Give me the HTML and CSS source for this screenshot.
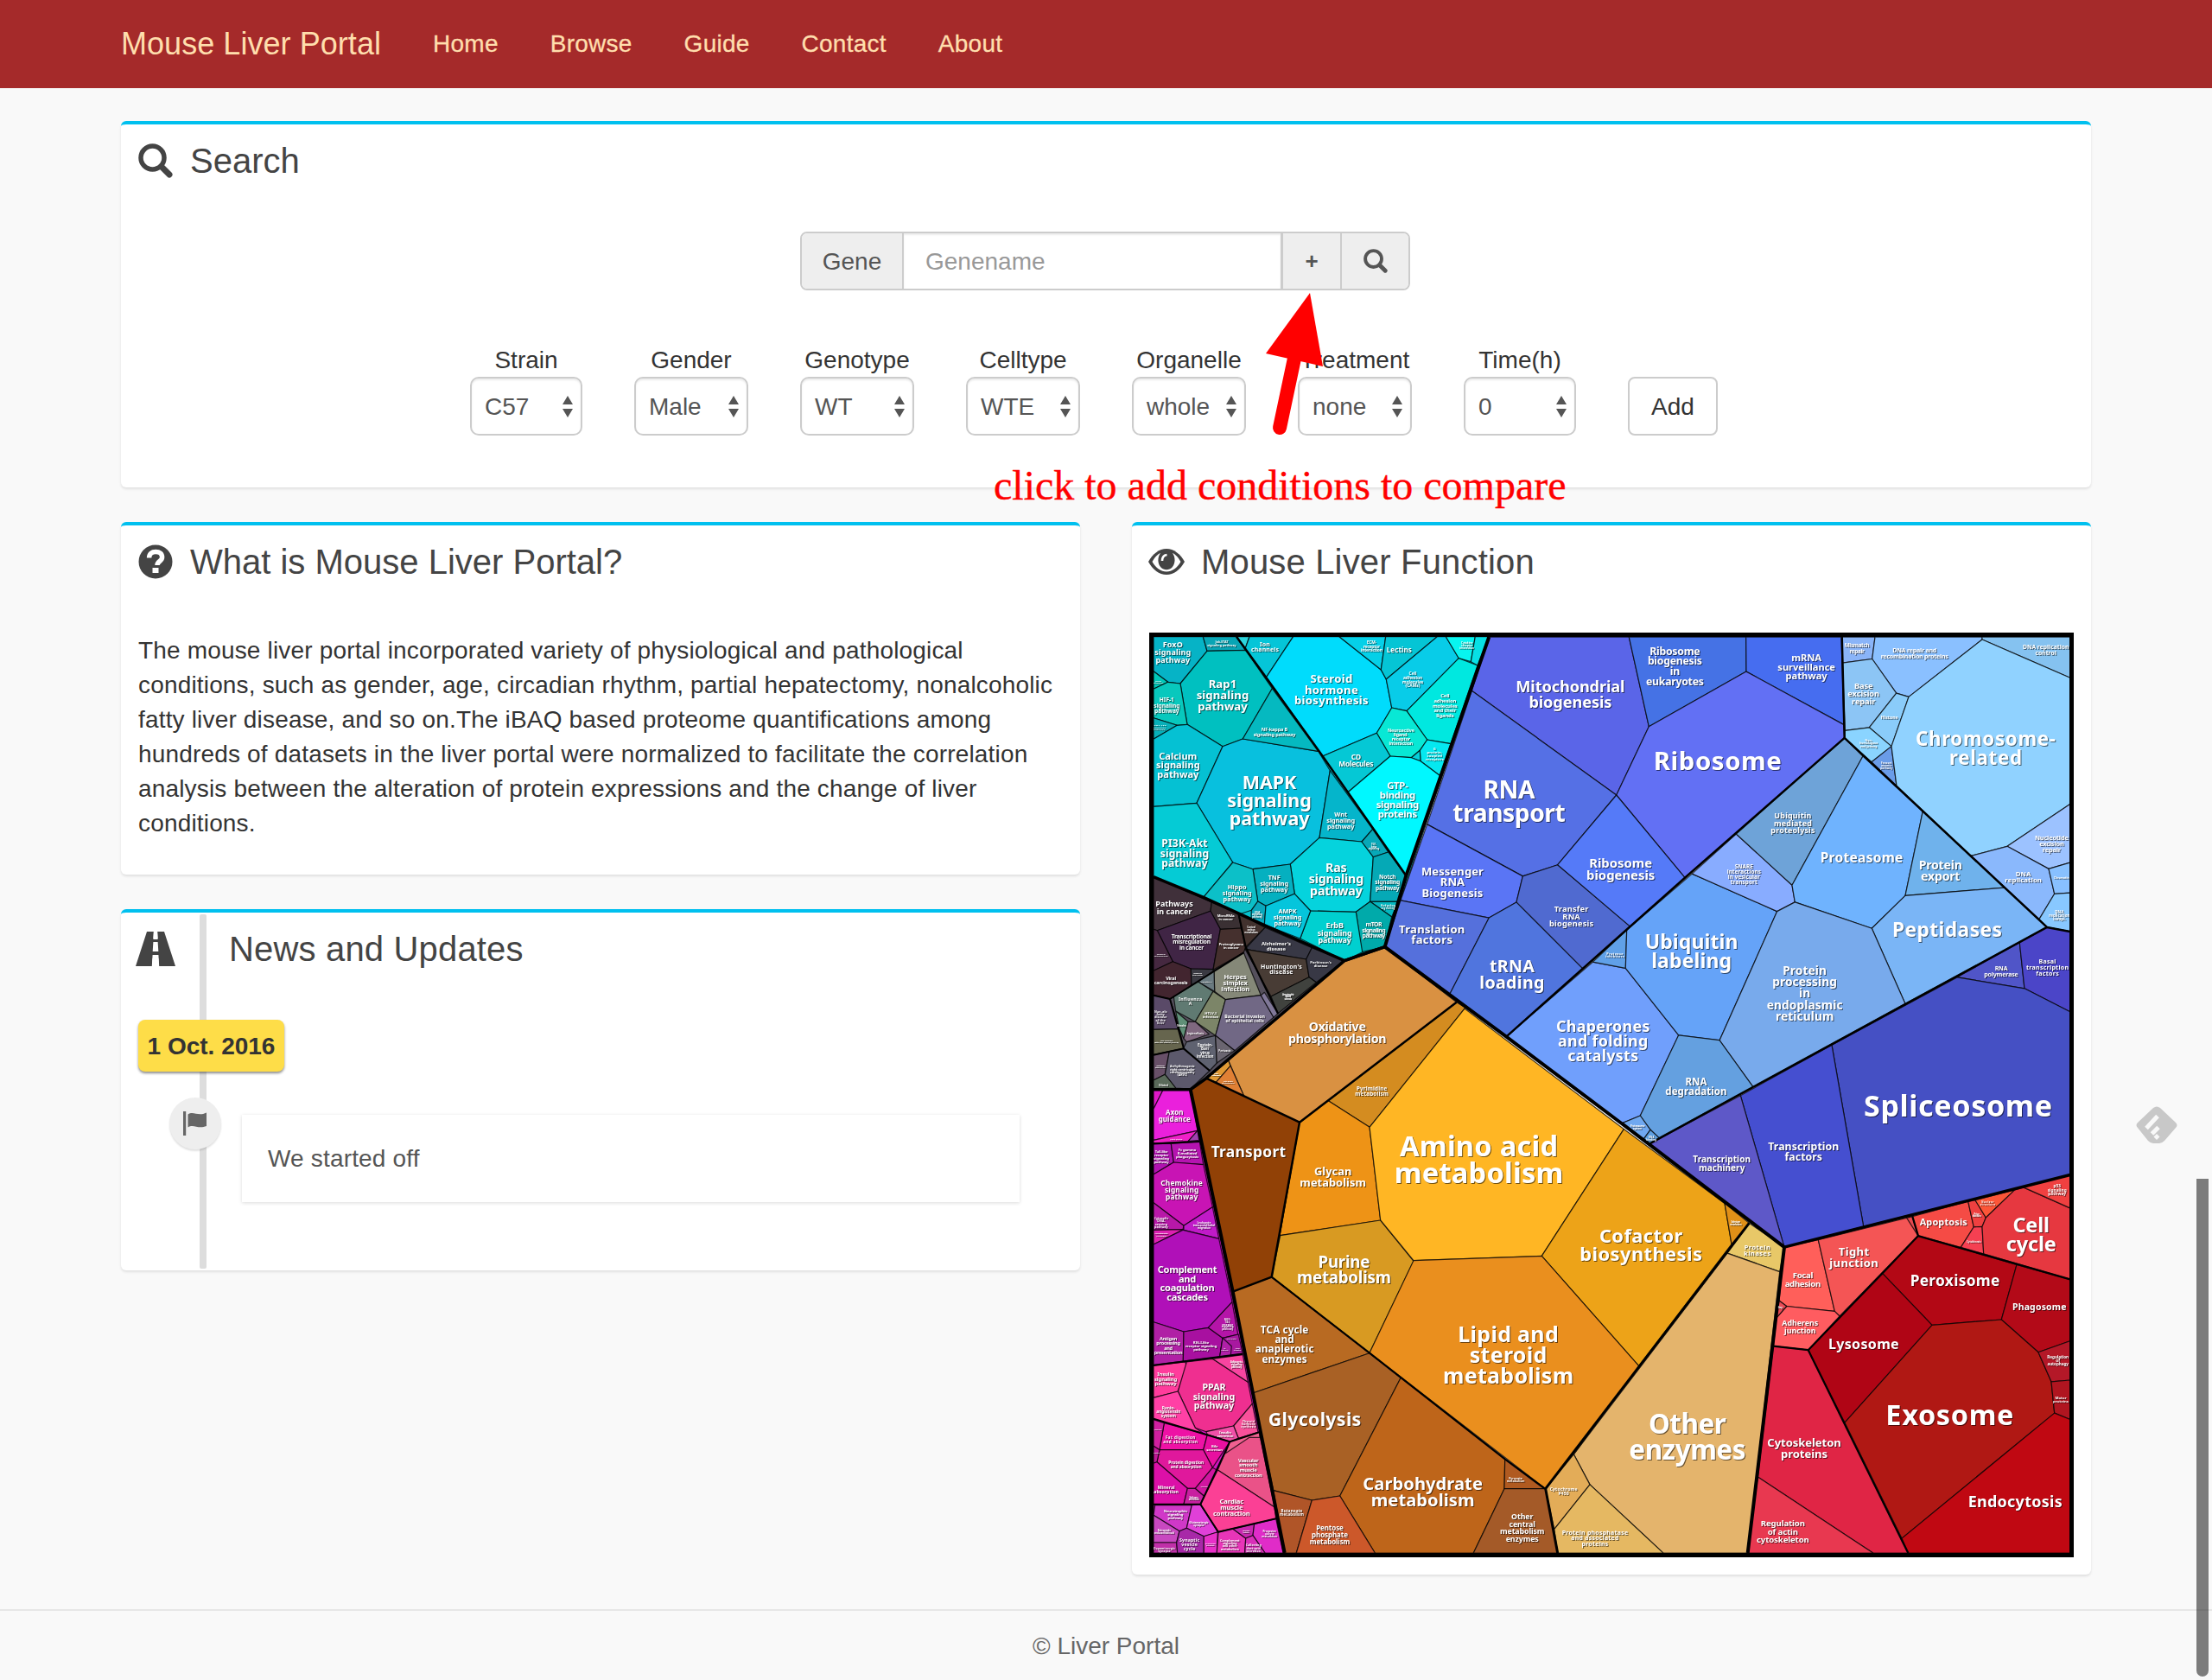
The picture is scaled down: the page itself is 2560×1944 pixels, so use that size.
FILE: index.html
```html
<!DOCTYPE html>
<html lang="en">
<head>
<meta charset="utf-8">
<title>Mouse Liver Portal</title>
<link rel="stylesheet" href="styles.css">
</head>
<body>
<svg class="defs" width="0" height="0" aria-hidden="true">
  <symbol id="i-search" viewBox="0 0 40 40"><circle cx="16.5" cy="16.5" r="13.5" fill="none" stroke="currentColor" stroke-width="5.500"/><path d="M27 27l9 9" stroke="currentColor" stroke-width="7" stroke-linecap="round"/></symbol>
  <symbol id="i-help" viewBox="0 0 40 40"><circle cx="20" cy="20" r="19.5" fill="currentColor"/><path d="M12.6 15.5c0-4.600 3-7 7.600-7s7.400 2.400 7.400 6.200c0 5-5.600 4.600-5.600 9.300" fill="none" stroke="#fff" stroke-width="5.500"/><path d="M16.500 27h7v6h-7z" fill="#fff"/></symbol>
  <symbol id="i-eye" viewBox="0 0 42 34"><path d="M0 17C5 8 12.500 2 21 2s16 6 21 15c-5 9-12.500 15-21 15S5 26 0 17z" fill="currentColor"/><path d="M4.500 17C8 11 11 8.500 14 7c-3.500 5-3.500 12 .5 16.500 3.500 3.500 9.500 3.500 13 0C31.500 19 31.500 12 28 7c3 1.500 6 4 9.500 10C33 24.500 27.500 28.500 21 28.500S9 24.500 4.500 17z" fill="#fff"/><path d="M16 16c0-4 2-6.500 5.500-7" fill="none" stroke="#fff" stroke-width="2.600"/></symbol>
  <symbol id="i-road" viewBox="0 0 46 40"><path d="M13 0h8l-.6 9h5.200L25 0h8l13 40H27l-.6-9h-6.800L19 40H0z" fill="currentColor"/><path d="M20.400 12h5.200l.7 11h-6.600z" fill="#fff"/><path d="M20.800 0h4.400l.4 8h-5.200zM19.600 27h6.800l.8 13h-8.400z" fill="#fff"/></symbol>
  <symbol id="i-flag" viewBox="0 0 28 28"><path d="M0 0h3.200v28H0z" fill="currentColor"/><path d="M5.500 3.500C12-1 17 6.500 27 1.500v15.500C17 21 12 14 5.500 18.500z" fill="currentColor"/></symbol>
</svg>

<nav class="navbar">
  <div class="container navbar-inner">
    <a class="brand">Mouse Liver Portal</a>
    <a class="nav-link">Home</a>
    <a class="nav-link">Browse</a>
    <a class="nav-link">Guide</a>
    <a class="nav-link">Contact</a>
    <a class="nav-link">About</a>
  </div>
</nav>

<main class="container content">
  <section class="box search-box">
    <h3 class="box-title"><svg class="icon"><use href="#i-search"/></svg>Search</h3>
    <div class="input-group">
      <span class="addon addon-label">Gene</span>
      <span class="field">Genename</span>
      <span class="addon addon-plus">+</span>
      <span class="addon addon-go"><svg class="icon-sm"><use href="#i-search"/></svg></span>
    </div>
    <div class="conditions">
      <div class="cond first"><label>Strain</label><div class="select">C57<i class="carets"></i></div></div>
      <div class="cond"><label>Gender</label><div class="select">Male<i class="carets"></i></div></div>
      <div class="cond"><label>Genotype</label><div class="select">WT<i class="carets"></i></div></div>
      <div class="cond"><label>Celltype</label><div class="select">WTE<i class="carets"></i></div></div>
      <div class="cond"><label>Organelle</label><div class="select">whole<i class="carets"></i></div></div>
      <div class="cond"><label>Treatment</label><div class="select">none<i class="carets"></i></div></div>
      <div class="cond last"><label>Time(h)</label><div class="select">0<i class="carets"></i></div></div>
      <div class="btn">Add</div>
    </div>
  </section>

  <div class="columns">
    <div class="column">
      <section class="box about-box">
        <h3 class="box-title"><svg class="icon"><use href="#i-help"/></svg>What is Mouse Liver Portal?</h3>
        <p>The mouse liver portal incorporated variety of physiological and pathological<br>conditions, such as gender, age, circadian rhythm, partial hepatectomy, nonalcoholic<br>fatty liver disease, and so on.The iBAQ based proteome quantifications among<br>hundreds of datasets in the liver portal were normalized to facilitate the correlation<br>analysis between the alteration of protein expressions and the change of liver<br>conditions.</p>
      </section>
      <section class="box news-box">
        <h3 class="box-title spaced"><svg class="icon-road"><use href="#i-road"/></svg>News and Updates</h3>
        <div class="date">1 Oct. 2016</div>
        <div class="entry">
          <div class="marker"><svg class="icon-flag"><use href="#i-flag"/></svg></div>
          <div class="entry-body">We started off</div>
        </div>
      </section>
    </div>
    <div class="column">
      <section class="box map-box">
        <h3 class="box-title spaced"><svg class="icon-eye"><use href="#i-eye"/></svg>Mouse Liver Function</h3>
        <svg class="map" id="map" viewBox="1330 732 1070 1070"></svg>
      </section>
    </div>
  </div>
</main>

<footer class="footer">© Liver Portal</footer>

<svg class="pointer" width="80" height="170" viewBox="1460 335 80 170"><path d="M1499 410L1481 495" stroke="#f00" stroke-width="16" stroke-linecap="round"/><path d="M1516 339l15 85-66-15z" fill="#f00"/></svg>
<div class="hint">click to add conditions to compare</div>
<svg class="feedly" viewBox="0 0 48 43"><path d="M20 2Q24-1 28 2L46 19Q49 22 46 25L33 40Q30 43 27 43H20Q17 43 14 40L2 25Q-1 22 2 19z" fill="#c8c8c8"/><path d="M12 25.500L25 11.500M18.500 32L26 24.500" stroke="#f9f9f9" stroke-width="5"/><path d="M24 32l3.500 3.500-3.500 3.500-3.500-3.500z" fill="#f9f9f9"/></svg>
<div class="scroll-thumb"></div>
<script src="map.js"></script>
</body>
</html>
```
FILE: styles.css
```css
* { box-sizing: border-box; }
body {
  margin: 0;
  position: relative;
  min-height: 1944px;
  overflow: hidden;
  background: #f9f9f9;
  color: #333;
  font: 28px/40px "Liberation Sans", Arial, sans-serif;
}
.defs { position: absolute; }
.container { width: 2280px; margin: 0 auto; }

.navbar { height: 102px; background: #a52a2a; color: #ffdead; }
.navbar-inner { display: flex; align-items: center; gap: 60px; height: 101px; }
.brand { font-size: 36px; letter-spacing: .05px; }
.nav-link { letter-spacing: .25px; -webkit-text-stroke: .3px; }

.content { display: flex; flex-direction: column; gap: 40px; padding-top: 38px; }
.columns { display: flex; gap: 60px; align-items: flex-start; }
.column { flex: 1; display: flex; flex-direction: column; gap: 40px; }
.box {
  background: #fff;
  border-top: 4px solid #00c0ef;
  border-radius: 6px;
  padding: 20px;
  box-shadow: 0 2px 3px rgba(0, 0, 0, .1);
}
.box-title {
  display: flex;
  align-items: center;
  gap: 20px;
  margin: 0 0 60px;
  height: 44px;
  font-size: 40px;
  line-height: 44px;
  font-weight: 400;
  color: #444;
}
.box-title.spaced { letter-spacing: .17px; }
.icon { width: 40px; height: 40px; }
.icon-sm { width: 28px; height: 28px; }
.icon-eye { width: 42px; height: 34px; margin: 0 -1px 0 -1px; }
.icon-road { width: 46px; height: 40px; margin: 0 42px 0 -3px; }
.icon-flag { width: 28px; height: 28px; }

.search-box { height: 424px; }
.input-group {
  display: flex;
  width: 706px;
  height: 68px;
  margin: 0 0 61px 766px;
  border: 2px solid #ccc;
  border-radius: 8px;
  overflow: hidden;
  line-height: 65px;
  color: #555;
}
.addon { display: flex; align-items: center; justify-content: center; background: #eee; }
.addon-label { width: 118px; border-right: 2px solid #ccc; }
.field { width: 436px; padding-left: 25px; color: #999; box-shadow: inset 0 2px 2px rgba(0, 0, 0, .075); }
.addon-plus { width: 71px; border-left: 3px solid #ccc; border-right: 2px solid #ccc; font-size: 26px; font-weight: 700; line-height: 67px; }
.addon-go { flex: 1; }

.conditions { display: flex; gap: 60px; margin-left: 384px; align-items: flex-end; }
.cond { width: 132px; text-align: center; }
.cond.first, .cond.last { width: 130px; }
.cond label { display: block; height: 39px; margin: 0 -10px; }
.select {
  display: flex;
  align-items: center;
  justify-content: space-between;
  height: 68px;
  padding: 1px 9px 0 15px;
  border: 2px solid #ccc;
  border-radius: 10px;
  color: #555;
  box-shadow: inset 0 2px 2px rgba(0, 0, 0, .075);
}
.carets { display: flex; flex-direction: column; gap: 5px; }
.carets::before, .carets::after { content: ""; border: 6.500px solid transparent; border-bottom: 10px solid #555; border-top: 0; }
.carets::after { border-top: 10px solid #555; border-bottom: 0; }
.btn {
  width: 104px;
  height: 68px;
  border: 2px solid #ccc;
  border-radius: 8px;
  text-align: center;
  line-height: 66px;
}

.about-box p { margin: 0 0 20px; white-space: nowrap; letter-spacing: .17px; line-height: 40px; padding-top: 1px; margin-bottom: 19px; }
.news-box { position: relative; height: 418px; }
.news-box::before {
  content: "";
  position: absolute;
  left: 91px;
  top: 2px;
  bottom: 2px;
  width: 8px;
  border-radius: 2px;
  background: #ddd;
}
.date {
  position: relative;
  width: 169px;
  height: 60px;
  border-radius: 8px;
  background: #fedd48;
  box-shadow: 0 2px 3px rgba(0, 0, 0, .45);
  text-align: center;
  line-height: 62px;
  font-weight: 700;
}
.entry { position: relative; display: flex; gap: 24px; margin: 30px 0 0 36px; }
.marker {
  display: flex;
  align-items: center;
  justify-content: center;
  width: 60px;
  height: 60px;
  border-radius: 50%;
  background: #eee;
  color: #666;
  box-shadow: 0 2px 2px rgba(0, 0, 0, .12);
}
.entry-body {
  width: 900px;
  height: 101px;
  margin-top: 20px;
  padding: 31px 30px;
  background: #fff;
  color: #555;
  letter-spacing: .17px;
  box-shadow: 0 1px 4px rgba(0, 0, 0, .15);
}

.map { display: block; width: 1070px; height: 1070px; }
.cell { stroke: rgba(0, 0, 0, .75); stroke-width: 1.200; stroke-linejoin: round; }
.edge { fill: none; stroke: #000; stroke-linejoin: round; }
.labels { fill: #fff; text-anchor: middle; font-family: "Noto Sans", sans-serif; font-weight: 700; filter: drop-shadow(1.200px 1.200px .5px rgba(0, 0, 0, .55)); }

.footer { margin-top: 40px; border-top: 2px solid #e7e7e7; padding-top: 21px; text-align: center; color: #666; }

.pointer { position: absolute; left: 1460px; top: 335px; }
.hint {
  position: absolute;
  left: 1150px;
  top: 536px;
  font: 48px/52px "Liberation Serif", "Times New Roman", serif;
  color: #f00;
  white-space: nowrap;
  -webkit-text-stroke: .4px;
}
.feedly { position: absolute; left: 2472px; top: 1280px; width: 48px; height: 43px; }
.scroll-thumb {
  position: absolute;
  left: 2542px;
  top: 1364px;
  width: 14px;
  height: 576px;
  border-radius: 0 0 7px 7px;
  background: rgba(0, 0, 0, .5);
}
```
FILE: map.js
```js
// Protein function map. Each sheet has its own origin and scale:
// [x, y, units per px across, units per px down]
const SHEETS = {
  A: [1320, 720, 3, 3],
  B: [1650, 720, 3, 2.8],
  C: [2030, 720, 3, 2.8],
  D: [2010, 1240, 3, 2.7034],
  E: [1680, 1240, 3, 2.7034],
  F: [1320, 1060, 3, 3],
  G: [1320, 1420, 3, 3]
};

// colour, corner points
const CELLS = {
  A: `#05c0cc 45,50 1210,50 848,1127 708,1175 45,884
#06b3c6 45,50 217,50 231,100 138,213 95,208 45,170
#08a5b5 217,50 333,50 365,97 231,100
#00c0c0 231,100 365,97 457,230 355,405 285,431 162,355 138,213
#00c8b8 45,170 95,208 45,232
#08c8bd 95,208 138,213 162,355 127,358 45,332 45,232
#08b0b8 45,332 127,358 45,406
#05c1d3 45,406 127,358 162,355 285,431 195,628 45,640
#08c0de 285,431 355,405 617,448 658,515 621,748 520,840 390,857 320,834 195,628
#05b9c0 457,230 617,448 355,405
#05cbd5 45,640 195,628 320,834 218,955 45,884
#05b5cb 658,515 806,718 768,762 621,748
#05d3dd 520,840 621,748 768,762 808,815 797,970 748,1006 590,1002 535,943
#05b0c0 390,857 520,840 535,943 435,985 407,969
#0cc0c8 320,834 390,857 407,969 385,1000 340,1015 218,955
#0aa8bc 385,1000 407,969 435,985 430,1050 384,1035
#08a8b8 768,762 806,718 860,798 808,815
#05a9b6 808,815 860,798 922,880 895,970 797,970
#05b8c0 797,970 895,970 872,1023
#00aaaa 797,970 872,1023 848,1127 768,1145 748,1006
#00d0d0 590,1002 748,1006 770,1145 708,1175 554,1098
#05c5dc 435,985 535,943 590,1002 554,1098 430,1050
#2cd5dd 333,50 378,50 364,90
#05c5d8 378,50 530,50 437,190 364,90
#00dcfc 530,50 690,50 835,165 853,198 872,297 820,385 632,465 437,190
#05d0e8 690,50 851,50 835,165
#05c5d5 851,50 1030,50 853,198 835,165
#08cce8 1030,50 1060,50 1105,125 924,308 872,297 853,198
#08f5f0 1060,50 1162,50 1147,137 1105,125
#08e0e5 1162,50 1210,50 1170,150 1147,137
#00e8e0 1105,125 1170,150 1077,422 995,408 924,308
#08e8d5 872,297 924,308 995,408 970,445 940,470 867,465 820,385
#05e8f0 995,408 1077,422 1040,533 972,482 970,445
#05d0d8 940,470 970,445 972,482
#05c8d5 632,465 820,385 867,465 720,590
#00f8ff 867,465 940,470 972,482 1040,533 922,880 720,590`,
  B: `#5a65e8 220,48 706,48 775,338 662,560 160,222
#4572e5 706,48 1112,48 1113,160 775,338
#466df0 1112,48 1443,48 1452,332 1113,160
#6270f4 1113,160 1452,332 1454,375 900,828 662,560 775,338
#5570e5 160,222 662,560 458,786 337,823 5,655
#5a75f5 5,655 337,823 315,907 220,958 -87,901
#5570dc -87,901 220,958 84,1204 -142,1052
#5075de 220,958 315,907 545,1122 280,1343 84,1204
#506ad0 337,823 458,786 710,986 545,1122 315,907
#557af8 662,560 900,828 710,986 458,786
#709ffc 580,1101 694,1121 878,1338 745,1599 680,1624 280,1343
#60a0e8 580,1101 698,997 694,1121
#65a3f8 925,815 1220,937 1020,1355 878,1338 694,1121 698,997
#88acff 1078,686 1272,852 1282,907 1220,937 925,815`,
  C: `#6ea3d8 314,375 378,434 132,852 -62,686
#8ab4f8 305,48 420,48 410,119 307,132
#8ac0ff 420,48 792,48 792,56 537,242 494,230 410,119
#85c2f0 792,48 1097,48 1097,180 792,56
#8cc5f5 307,132 410,119 494,230 400,341 316,351
#8accfa 494,230 537,242 477,402 400,341
#8ad4ff 316,351 400,341 477,402 408,453 314,375
#6a9ce8 408,453 477,402 495,530
#90d2ff 537,242 792,56 1097,180 1097,589 879,726 753,757 495,530 477,402
#9cc2ff 1097,589 1097,779 1023,799 879,726
#8ab8fc 753,757 879,726 1023,799 1043,880 990,962
#88c0ff 1023,799 1097,779 1097,877 1043,880
#88c8ff 1043,880 1097,877 1097,1002 1017,988 990,962
#6fb3fe 378,434 586,612 525,886 409,992 142,907 132,852
#6fb2ec 586,612 870,860 525,886
#7ab5f6 525,886 870,860 1017,988 525,1236 409,992
#78aaec 142,907 409,992 525,1236 -3,1506 -120,1355 80,937
#5055c8 705,1150 922,1038 939,1187
#4b45c8 922,1038 1017,988 1097,1002 1097,1262 939,1187`,
  D: `#4550c4 330,-83 765,-295 999,-260 1157,-187 1157,323 440,485
#454fd0 13,75 330,-83 440,485 165,549
#ff5f5a 165,549 283,526 340,750 173,734 147,716
#f45555 283,526 610,453 630,514 357,765 340,750
#e84a50 590,458 610,453 630,514
#ff5c60 173,734 340,750 357,765 248,871 127,859 138,770
#e84a55 147,716 173,734 138,770
#f54b45 610,453 803,406 823,486 778,550 630,514
#ee4040 803,406 828,402 865,457 852,485 823,486
#fc5638 828,402 965,370 865,457
#f54052 823,486 852,485 857,570 778,550
#e63840 965,370 995,362 1157,427 1157,650 857,570 852,485 865,457
#f04040 995,362 1157,323 1157,427
#b30815 630,514 972,604 919,776 678,793 507,632
#b30a18 972,604 1157,650 1157,843 1047,878 919,776
#b00515 507,632 678,793 375,1098 248,871
#b01814 678,793 919,776 1047,878 1092,970 1103,1068 573,1460 375,1098
#b41828 1047,878 1157,843 1157,965 1092,970
#b01520 1092,970 1157,965 1157,1088 1103,1068
#c00812 1103,1068 1157,1088 1157,1506 595,1506 573,1460
#e02545 127,859 248,871 595,1506 473,1506 73,1268
#e83850 73,1268 473,1506 38,1506`,
  E: `#64a0e0 788,-114 930,-98 1047,48 720,207 690,182 655,138
#70a8f0 590,162 655,138 690,182 665,213
#5fa0e0 690,182 720,207 685,227 665,213
#5e58c8 685,227 1003,75 1155,549
#ffb624 45,-197 598,180 313,577 -132,591 -247,465 -285,174
#eda318 598,180 948,412 972,540 650,921 313,577
#e09018 948,412 1033,474 972,540
#e8c868 1033,474 1155,549 1139,626 957,568
#e4b46c 957,568 1139,626 1028,1506 735,1506 480,1292 424,1197
#ea8f1e -132,591 313,577 650,921 424,1197 326,1305 -285,880
#e3ac58 424,1197 480,1292 356,1432 326,1305
#e5b862 480,1292 735,1506 368,1506 356,1432
#b05a20 185,1212 326,1305 183,1305
#a45a28 183,1305 326,1305 368,1506 76,1506`,
  F: `#d99142 708,155 848,107 1097,299 552,716 360,627 303,497
#e09a35 228,563 303,497 312,520 262,577
#e08035 262,577 312,520 360,627
#d48c20 1097,299 1128,318 795,733 652,641
#ee9316 652,641 795,733 833,1056 483,1109 552,716
#914106 228,563 552,716 483,1109 455,1253 320,1304 173,602
#55505c 45,-136 340,-10 708,155 228,563 173,602 45,602
#40303a 45,-136 247,-48 243,-17 58,50 45,46
#3a3033 247,-48 340,-10 350,42 277,46 243,-17
#402545 58,50 243,-17 277,46 252,185 175,183 112,158
#45302e 277,46 350,42 365,108 358,127 252,187
#42322e 340,-10 432,40 365,108 350,42
#452840 45,46 58,50 112,158 45,190
#42252f 112,158 175,183 177,245 102,288 45,275 45,190
#3a3a42 175,183 252,185 252,195 177,240
#383845 432,40 595,110 575,150 363,115
#483c35 363,115 575,150 585,212 453,279
#383845 595,110 708,155 610,230 585,212 575,150
#40423e 453,279 585,212 610,230 477,338
#858878 358,127 418,275 295,290 257,262 255,190
#607a72 115,280 200,228 252,262 190,367 122,330
#6a7a80 200,228 255,190 257,262
#7c8568 252,262 295,290 260,415 190,367
#716885 295,290 418,275 462,352 327,467 260,415
#807898 418,275 430,265 477,338 462,352
#5a4a68 45,275 102,288 135,392 45,394
#66654e 45,394 135,392 150,460 45,482
#609078 122,330 165,367 150,425 135,392
#80687f 165,367 190,367 238,410 160,437 150,425
#5f6270 160,437 260,415 265,510 240,537 147,462
#6a6570 260,415 327,467 265,510
#685068 45,482 100,470 85,550 45,570
#5c596c 100,470 147,460 240,537 173,600 122,597 85,550
#5a6a5a 45,570 85,550 122,597 45,600
#d015c0 45,602 173,602 500,2211 45,2211
#e018c8 45,604 78,604 45,670
#ea20dc 78,604 173,602 198,745 45,778 45,670
#f020c8 45,778 198,745 165,782 45,790
#a040b0 198,745 203,778 165,782
#b012b0 45,790 106,790 115,855 45,897
#b514b0 106,790 205,783 218,863 115,855
#c814b4 115,855 218,863 250,1010 150,1075 45,995 45,897
#b818a8 45,995 150,1075 147,1088 45,1090
#c01ac8 250,1010 272,1120 150,1090 150,1075
#dc20b0 45,1090 148,1088 45,1140`,
  G: `#d89a22 485,29 833,-24 948,118 795,437 455,173
#b86a22 455,173 795,437 390,576 320,224
#a96125 795,437 904,522 692,933 595,948 461,914 390,576
#be651a 904,522 1265,805 1263,908 1156,1131 814,1131 692,933
#b05528 461,914 595,948 541,1131 500,1131
#cc582a 595,948 692,933 814,1131 541,1131
#b010b8 148,10 272,40 318,260 235,349 150,363 45,329 45,60
#b020a5 45,329 150,363 148,465 45,478
#a810a0 150,363 235,349 285,385 275,450 148,465
#b515a8 318,260 338,372 285,385 235,349
#a818a0 285,385 340,372 355,440 275,450
#b020a8 285,385 316,413 313,445 275,450
#ff3c9c 45,480 155,468 160,480 130,570 45,592
#ef2f90 160,468 250,457 373,538 388,613 323,690 228,710 190,697 130,570
#f845a0 250,457 355,443 373,538
#ff40a5 45,592 130,570 190,697 228,722 45,665
#f8509a 388,613 408,712 340,733 323,690
#f050a8 228,710 323,690 340,733 310,745 232,720
#ee12a5 82,680 232,720 218,773 66,773
#d020a0 45,668 82,680 66,773 45,760
#e810a0 232,720 310,745 250,835 218,773
#e0189c 66,773 218,773 250,835 190,907 163,907 57,815
#c01898 45,760 66,773 57,815 45,820
#dc10a8 45,820 57,815 163,907 150,962 45,962
#c820a0 163,907 190,907 223,935 208,962 150,962
#d015a0 190,907 250,835 265,843 223,935
#ea5288 310,745 412,712 465,972 268,843
#f06090 310,745 412,712 414,730 378,730 295,785
#fb4095 268,843 465,972 470,1012 270,1058 208,962
#d038c8 50,965 178,965 160,1045 135,1055 45,1000
#e040d8 178,965 208,962 268,1058 220,1073 160,1045
#c848c0 45,1000 135,1055 125,1095 45,1095
#c030a8 45,1095 125,1095 128,1131 45,1131
#a828a8 135,1055 160,1045 220,1073 220,1131 128,1131 125,1095
#e830c8 220,1073 268,1058 265,1131 220,1131
#e835b8 270,1058 320,1047 365,1080 362,1131 265,1131
#c828b0 320,1047 395,1030 390,1070 365,1080
#e02cc8 395,1030 470,1012 495,1131 432,1131 390,1070
#d830b8 365,1080 390,1070 432,1131 362,1131`
};

// width, points of the heavier borders between groups
const EDGES = {
  A: `2.5 333,50 632,465 922,880
4 1210,51 922,880 848,1127
3.5 45,884 218,955 430,1052 708,1175 848,1127`,
  B: `4 -142,1052 280,1343 680,1624`,
  C: `2.5 305,48 314,375 1017,988 1097,1002
2.5 314,375 -240,828 -860,1343
2.5 1017,988 -3,1506`,
  D: `3.5 165,549 1157,323
2.2 127,859 248,871 630,514 1157,650
2.2 248,871 595,1506
2.2 610,453 630,514`,
  E: `4 590,162 1155,549 1028,1506
2.5 685,227 1047,48
3 326,1305 1033,474
3 326,1305 368,1506`,
  F: `3.5 848,107 708,155 228,563 173,602 45,602
4 173,602 320,1304 500,2211
2.5 1097,299 552,716 455,1253 320,1304
2.5 552,716 228,563
2.2 340,-10 365,108 477,338
2 358,127 102,288 45,275
2 102,288 150,460 240,537
2 150,460 45,482
2.2 45,790 205,783`,
  G: `2.2 455,173 795,437 1265,805 1404,908
2.2 45,480 355,440
2 45,665 310,745 412,712
2 310,745 208,962 45,962
2 208,962 270,1058 470,1012`
};

// centre x, centre y, widest line, line pitch, text
const LABELS = {
  A: `112,105,126,26,FoxO|signaling|pathway
282,74,100,10,Jak-STAT|signaling pathway
285,254,182,38,Rap1|signaling|pathway
432,86,96,20,Ion|channels
663,235,258,38,Steroid|hormone|biosynthesis
802,84,74,14,ECM-|receptor|interaction
898,98,88,22,Lectins
945,200,74,14,Cell|adhesion|molecules|(CAMs)
1057,290,86,17,Cell|adhesion|molecules|and their|ligands
1133,80,50,9,Cytokine|receptor|interaction
62,208,32,7,MAPK|signaling
91,289,90,19,HIF-1|signaling|pathway
66,366,48,7,cGMP-PKG|signaling|pathway
465,381,146,16,NF-kappa B|signaling pathway
904,398,92,15,Neuroactive|ligand-|receptor|interaction
1021,459,64,12,G|protein-|coupled|receptors
748,480,120,24,CD|Molecules
130,497,152,32,Calcium|signaling|pathway
892,617,148,33,GTP-|binding|signaling|proteins
447,620,292,62,MAPK|signaling|pathway
695,688,98,21,Wnt|signaling|pathway
810,779,38,8,TGF-|beta|signaling
153,803,170,35,PI3K-Akt|signaling|pathway
679,893,190,41,Ras|signaling|pathway
464,908,98,21,TNF|signaling|pathway
857,903,86,19,Notch|signaling|pathway
335,940,102,21,Hippo|signaling|pathway
405,1015,36,8,VEGF|signaling|pathway
860,988,52,8,Hedgehog|signaling
510,1025,98,21,AMPK|signaling|pathway
674,1079,120,26,ErbB|signaling|pathway
809,1069,80,20,mTOR|signaling|pathway
117,991,130,26,Pathways|in cancer
296,1026,60,11,MicroRNAs|in cancer
177,1110,140,19,Transcriptional|misregulation|in cancer
384,1068,46,8,Central|carbon|metabolism`,
  B: `502,235,378,49,Mitochondrial|biogenesis
865,143,200,33,Ribosome|biogenesis|in|eukaryotes
1014,450,446,69,Ribosome
289,582,390,76,RNA|transport
93,843,216,35,Messenger|RNA|Biogenesis
677,800,238,40,Ribosome|biogenesis
506,953,154,25,Transfer|RNA|biogenesis
22,1013,230,35,Translation|factors
300,1143,226,53,tRNA|loading
923,1067,324,62,Ubiquitin|labeling
657,1079,66,10,Protease|inhibitors
1105,818,118,17,SNARE|interactions|in vesicular|transport
616,1358,326,48,Chaperones|and folding|catalysts
939,1506,214,31,RNA|degradation`,
  C: `182,145,200,30,mRNA|surveillance|pathway
357,85,86,17,Mismatch|repair
557,100,234,19,DNA repair and|recombination proteins
1013,90,160,18,DNA replication|control
380,233,110,25,Base|excision|repair
470,310,60,14,Histone
398,393,64,9,Non-|homologous|end-joining
460,464,42,8,Fanconi|anemia|pathway
805,410,488,60,Chromosome-|related
135,651,154,24,Ubiquitin|mediated|proteolysis
374,765,288,40,Proteasome
647,806,150,38,Protein|export
1033,719,116,20,Nucleotide|excision|repair
935,825,128,21,DNA|replication
1067,829,54,8,Chromatin
1060,951,72,12,DNA|replication|compl.
671,998,382,62,Peptidases
176,1203,264,37,Protein|processing|in|endoplasmic|reticulum
858,1132,118,19,RNA|polymerase
1019,1119,148,19,Basal|transcription|factors`,
  D: `769,110,656,84,Spliceosome
232,250,246,32,Transcription|factors
407,582,170,34,Tight|junction
229,651,124,25,Focal|adhesion
220,799,126,23,Adherens|junction
151,738,16,7,Gap
718,471,166,28,Apoptosis
833,449,30,7,Prion|diseases
872,412,54,7,Nuclear|structure
823,534,50,8,Cytokinesis
1022,511,174,61,Cell|cycle
1112,371,66,12,p53|signaling|pathway
758,654,312,38,Peroxisome
1051,736,188,27,Phagosome
441,852,246,37,Lysosome
1115,904,74,12,Regulation|of|autophagy
1125,1025,54,11,Motor|proteins
740,1075,446,85,Exosome
967,1347,328,37,Endocytosis
234,1179,256,34,Cytoskeleton|proteins
160,1439,182,25,Regulation|of actin|cytoskeleton`,
  E: `938,288,200,26,Transcription|machinery
95,277,588,85,Amino acid|metabolism
645,175,50,8,Proteasome|system
694,210,36,7,RNA|binding
658,543,426,57,Cofactor|biosynthesis
986,474,40,7,Selenium|metabolism
1062,559,94,19,Protein|kinases
197,887,454,65,Lipid and|steroid|metabolism
818,1145,404,82,Other|enzymes
222,1276,62,9,Pyruvate|metabolism
389,1314,96,13,Cytochrome|P450
245,1428,154,23,Other|central|metabolism|enzymes
498,1460,230,18,Protein phosphatase|and associated|proteins`,
  F: `683,406,340,41,Oxidative|phosphorylation
262,550,30,7,Sulfur|metabolism
304,577,44,7,Nitrogen|metabolism
803,609,116,18,Pyrimidine|metabolism
375,819,260,44,Transport
668,906,230,37,Glycan|metabolism
314,104,84,12,Proteoglycans|in cancer
471,104,102,17,Alzheimer's|disease
489,185,144,20,Huntington's|disease
626,166,74,12,Parkinson's|disease
512,280,40,8,Amyotrophic|lateral|sclerosis
71,137,48,6,Chemical|carcinogenesis
105,223,116,16,Viral|carcinogenesis
198,202,36,7,Small cell|lung cancer
229,228,36,6,Hepatitis C
329,232,98,22,Herpes|simplex|infection
173,296,82,15,Influenza|A
243,345,56,12,HTLV-I|infection
362,355,140,15,Bacterial invasion|of epithelial cells
70,351,44,10,Non-alc|fatty|disease|of the|liver
90,436,84,7,Non-alcoholic|fatty liver disease (NAFLD)
143,380,32,6,Measles
190,409,58,7,Legionellosis
224,468,58,13,Epstein-|Barr|virus|infection
292,467,42,6,Pertussis
68,524,36,6,Hypertrophic|cardiomyopathy
145,537,86,10,Arrhythmogenic|right ventricular|cardiomyopathy|(ARVC)
80,588,32,6,Dilated
118,694,112,23,Axon|guidance
124,775,42,6,Platelet activation
72,836,52,12,Toll-like|receptor|signaling|pathway
162,825,78,12,Fc gamma|R-mediated|phagocytosis
143,951,146,24,Chemokine|signaling|pathway
72,1064,50,10,Cytosolic|DNA-|sensing|pathway
220,1075,76,9,Leukocyte|transendothelial|migration
72,1106,46,7,Hematopoietic|cell lineage`,
  G: `162,196,206,32,Complement|and|coagulation|cascades
706,149,326,54,Purine|metabolism
500,407,204,34,TCA cycle|and|anaplerotic|enzymes
96,411,98,16,Antigen|processing|and|presentation
210,412,110,12,RIG-I-like|receptor signaling|pathway
302,338,42,8,NOD-|like|receptor|signaling|pathway
316,388,34,6,B cell receptor
292,425,24,6,Fc|epsilon
336,425,26,6,T cell|receptor
87,527,78,17,Insulin|signaling|pathway
255,588,146,31,PPAR|signaling|pathway
333,478,44,9,Adipocyto.|signaling|pathway
97,641,84,14,Renin-|angiotensin|system
375,685,52,9,Thyroid|hormone|synthesis
294,719,56,12,Insulin|secretion
605,669,324,58,Glycolysis
139,738,120,13,Fat digestion|and absorption
257,768,56,12,Bile|secretion
158,824,122,14,Protein digestion|and absorption
89,911,86,15,Mineral|absorption
185,942,36,8,Salivary|secretion
60,705,26,6,Carbohydrate
56,784,20,6,Gastric
221,900,24,6,Pancreatic
374,834,96,17,Vascular|smooth|muscle|contraction
316,973,128,22,Cardiac|muscle|contraction
980,920,416,58,Carbohydrate|metabolism
525,991,84,13,Butanoate|metabolism
657,1069,140,23,Pentose|phosphate|metabolism
121,997,82,12,Neurotrophin|signaling|pathway
202,1029,66,9,Glutamatergic|synapse
82,1058,70,8,Retrograde|endocannabinoid
83,1119,74,9,Dopaminergic|synapse
170,1103,70,15,Synaptic|vesicle|cycle
242,1101,36,7,GABAergic|synapse
310,1102,68,10,Complement|signaling|and other|metabolism
366,1057,24,7,Circadian|rhythm
448,1064,54,9,Progester.|oocyte|maturation
392,1114,54,10,Collecting|duct acid|secretion`
};

const NS = 'http://www.w3.org/2000/svg';
const map = document.getElementById('map');
function add(parent, tag, attrs, text) {
  const el = document.createElementNS(NS, tag);
  for (const k in attrs) el.setAttribute(k, attrs[k]);
  if (text) el.textContent = text;
  parent.appendChild(el);
  return el;
}
function place(key, pts) {
  const [ox, oy, sx, sy] = SHEETS[key];
  return pts.map(p => {
    const [x, y] = p.split(',').map(Number);
    return (ox + x / sx).toFixed(1) + ',' + (oy + y / sy).toFixed(1);
  }).join(' ');
}
function rows(set, fn) {
  for (const key of Object.keys(set)) set[key].split('\n').forEach(r => fn(key, r));
}

rows({ A: CELLS.A, F: CELLS.F, G: CELLS.G, B: CELLS.B, C: CELLS.C, D: CELLS.D, E: CELLS.E }, (key, row) => {
  const [fill, ...pts] = row.split(' ');
  add(map, 'polygon', { class: 'cell', fill, points: place(key, pts) });
});
rows(EDGES, (key, row) => {
  const [w, ...pts] = row.split(' ');
  add(map, 'polyline', { class: 'edge', 'stroke-width': w, points: place(key, pts) });
});
const labels = add(map, 'g', { class: 'labels' });
rows(LABELS, (key, row) => {
  const [ox, oy, sx, sy] = SHEETS[key];
  const [cx, cy, width, pitch, text] = row.split(',');
  const step = pitch / sy;
  const target = width / sx;
  const names = text.split('|');
  let size = step * 1.04;
  const block = add(labels, 'text', { 'font-size': size });
  const lines = names.map(name => add(block, 'tspan', {}, name));
  const length = line => line.getComputedTextLength();
  const widest = lines.reduce((a, b) => length(a) > length(b) ? a : b);
  // a one-line label takes its size from its width
  if (lines.length === 1) {
    size *= target / length(widest) * 0.97;
    block.setAttribute('font-size', size);
  }
  const spacing = (target - length(widest)) / widest.textContent.length;
  block.setAttribute('letter-spacing', spacing);
  lines.forEach((line, i) => {
    line.setAttribute('x', ox + cx / sx);
    line.setAttribute('y', oy + cy / sy + (i - (lines.length - 1) / 2) * step + size * 0.34);
  });
});
add(map, 'rect', { x: 1332.5, y: 734.5, width: 1065, height: 1065, fill: 'none', stroke: '#000', 'stroke-width': 5 });
```
